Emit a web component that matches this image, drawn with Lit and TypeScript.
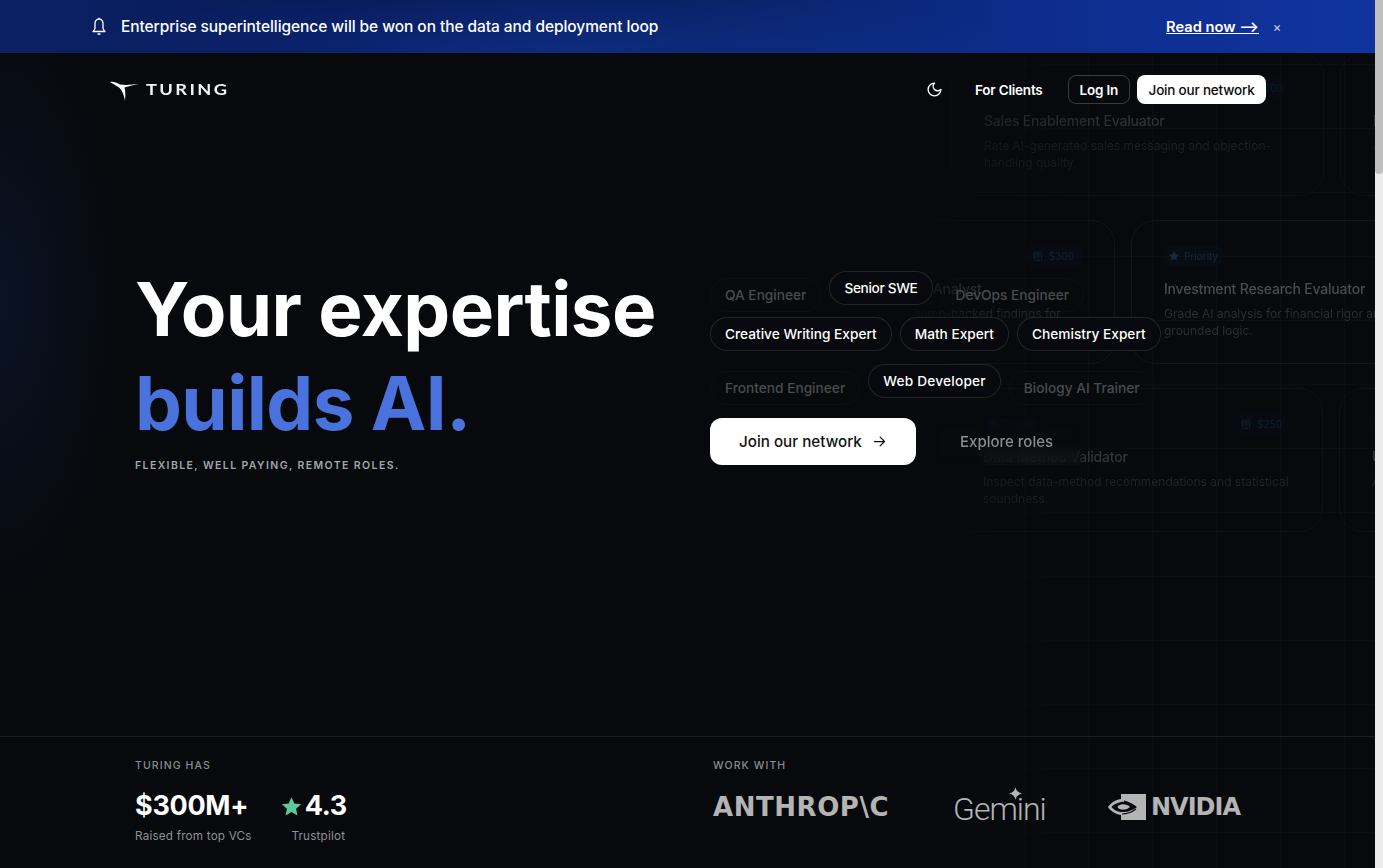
import { LitElement, html, css, svg } from "lit";
import { customElement } from "lit/decorators.js";

const gift = svg`<svg class="bi" viewBox="0 0 24 24" fill="none" stroke="currentColor" stroke-width="2"><rect x="3" y="8" width="18" height="4" rx="1"/><path d="M12 8v13M19 12v7a2 2 0 0 1-2 2H7a2 2 0 0 1-2-2v-7M7.5 8a2.5 2.5 0 0 1 0-5C11 3 12 8 12 8s1-5 4.500-5a2.500 2.500 0 0 1 0 5"/></svg>`;
const star = svg`<svg class="bi" viewBox="0 0 24 24" fill="currentColor"><path d="M12 1.500l3.200 7 7.300.8-5.400 5 1.500 7.400L12 18l-6.600 3.700 1.500-7.400-5.400-5 7.300-.8z"/></svg>`;

interface Card { title: string; desc: string; left?: string; right?: string; }
const rows: { cls: string; cards: Card[] }[] = [
  { cls: "r1", cards: [
    { title: "Sales Enablement Evaluator", desc: "Rate AI-generated sales messaging and objection-\nhandling quality.", right: "$200" },
    { title: "Insurance Claims Reviewer", desc: "Assess AI claim summaries and coverage reasoning.", left: "Priority" },
  ]},
  { cls: "r2", cards: [
    { title: "Quantitative Investment Analyst", desc: "Evaluate models and research-backed findings for\naccuracy.", right: "$300" },
    { title: "Investment Research Evaluator", desc: "Grade AI analysis for financial rigor and\ngrounded logic.", left: "Priority" },
  ]},
  { cls: "r3", cards: [
    { title: "Data Method Validator", desc: "Inspect data-method recommendations and statistical\nsoundness.", left: "Priority", right: "$250" },
    { title: "UX Copy Reviewer", desc: "Audit AI interface copy for clarity and tone.", left: "Priority" },
  ]},
];

@customElement("app-root")
export class AppRoot extends LitElement {
  static styles = css`
    :host { display: flex; width: 1383px; height: 868px; overflow: hidden; font-family: Inter, "Open Sans", sans-serif; color: #fff; background: #07090d; }
    * { box-sizing: border-box; }
    .main { position: relative; width: 1375px; height: 868px; display: flex; flex-direction: column; overflow: hidden; background: #07090d; }
    .bar { width: 8px; height: 868px; background: #ececec; }
    .thumb { width: 8px; height: 174px; background: #bfbfbf; border-radius: 0 0 4px 4px; }

    .decor { position: absolute; inset: 0; pointer-events: none; overflow: hidden; }
    .glow { position: absolute; inset: 0; background: radial-gradient(ellipse 120px 300px at 0 300px, rgba(28,66,150,.17), transparent 100%); }
    .grid { position: absolute; inset: 0;
      background-image: linear-gradient(to right, rgba(255,255,255,.02) 1px, transparent 1px), linear-gradient(to bottom, rgba(255,255,255,.02) 1px, transparent 1px);
      background-size: 64px 64px;
      -webkit-mask-image: linear-gradient(to right, transparent 800px, #000 1150px);
      mask-image: linear-gradient(to right, transparent 800px, #000 1150px); }
    .cards { position: absolute; inset: 52px 0 0 0; display: flex; flex-direction: column; gap: 24px;
      -webkit-mask-image: linear-gradient(to right, transparent 900px, rgba(0,0,0,.6) 985px, #000 1140px);
      mask-image: linear-gradient(to right, transparent 900px, rgba(0,0,0,.6) 985px, #000 1140px); }
    .row { display: flex; gap: 16px; width: 1000px; }
    .r1 { margin-left: 951px; opacity: .62; }
    .r2 { margin-left: 742px; }
    .r3 { margin-left: 950px; opacity: .72; }
    .card { flex: 0 0 373px; height: 144px; border: 1px solid rgba(255,255,255,.05); border-radius: 24px; padding: 24px 32px; display: flex; flex-direction: column; }
    .chead { display: flex; justify-content: space-between; height: 22px; margin-bottom: 12px; }
    .badge { display: flex; align-items: center; gap: 5px; height: 22px; padding: 0 8px; border-radius: 8px; background: rgba(30,80,130,.05); color: #12293f; font-size: 10px; margin-left: auto; }
    .badge.l { margin-left: 0; margin-right: auto; gap: 4px; padding: 0 4px; }
    .bi { width: 12px; height: 12px; }
    .ct { font-size: 14px; font-weight: 500; color: #4a4b50; line-height: 20px; white-space: nowrap; letter-spacing: -.2px; }
    .cd { font-size: 12px; color: #2c2d32; line-height: 17px; margin-top: 6px; white-space: pre; }

    .banner { position: relative; height: 53px; flex: none; display: flex; align-items: center; padding: 0 92px 0 92px;
      background: radial-gradient(ellipse 500px 90px at 560px 70px, rgba(20,60,170,.55), transparent), linear-gradient(90deg, #0b2164 0, #071a58 25%, #08205f 50%, #0d2c8c 75%, #10349f 100%);
      box-shadow: 0 1px 0 rgba(0,0,0,.5); }
    .bell { width: 14px; height: 20px; margin-right: 15px; flex: none; }
    .bt { font-size: 15.500px; font-weight: 500; flex: 1; white-space: nowrap; letter-spacing: -.07px; }
    .read { font-size: 14.700px; font-weight: 600; color: #fff; text-decoration: underline; margin-right: 12px; }
    .x { font-size: 13px; width: 12px; text-align: center; color: #d0d7ee; }

    nav { position: relative; height: 73px; flex: none; display: flex; align-items: center; padding: 0 109px 0 110px; }
    .logo { display: flex; align-items: center; gap: 7px; }
    .swoosh { width: 29px; height: 22px; margin-top: 3px; }
    .word { font-family: Lato, sans-serif; font-size: 14.500px; font-weight: 700; letter-spacing: 1.900px; color: #f2f2f2; transform: scaleX(1.26); transform-origin: left; }
    .links { margin-left: auto; display: flex; align-items: center; }
    .moon { width: 17px; height: 17px; margin-right: 32px; }
    .fc { font-size: 13.500px; font-weight: 600; margin-right: 25px; white-space: nowrap; letter-spacing: -.2px; }
    .btn { height: 29px; display: flex; align-items: center; padding: 0 11px; border-radius: 8px; font-size: 13.500px; font-weight: 600; white-space: nowrap; letter-spacing: -.2px; }
    .login { border: 1px solid rgba(255,255,255,.2); margin-right: 7px; }
    .njoin { background: #fff; color: #0a0a0a; font-weight: 500; padding: 0 11.500px; }

    .hero { position: relative; flex: 1; display: grid; grid-template-columns: 575px 1fr; padding: 136px 0 0 135px; }
    h1 { margin: 0; font-size: 74.500px; font-weight: 650; line-height: 94px; letter-spacing: -.6px; white-space: nowrap; }
    h1 span { display: block; }
    .blue { color: #4a72dc; }
    .sub { margin-top: 9px; font-size: 10.500px; font-weight: 600; letter-spacing: 1.400px; color: #a3a5a9; }

    .right { padding-top: 15px; }
    .chips { display: flex; flex-direction: column; gap: 4px; }
    .crow { display: flex; gap: 8px; height: 35px; align-items: center; }
    .crow + .crow + .crow { margin-top: 15px; }
    .chip { height: 34px; display: flex; align-items: center; padding: 0 14px; border-radius: 18px; border: 1px solid rgba(255,255,255,.11); background: rgba(8,10,14,.92); font-size: 13.700px; font-weight: 500; white-space: nowrap; color: #fff; }
    .chip.f { border-color: rgba(255,255,255,.025); background: transparent; color: #494b50; }
    .chip.up { transform: translateY(-7px); }
    .chip.sw { letter-spacing: -.35px; }
    .chip.wd { letter-spacing: .2px; }
    .cta { display: flex; align-items: center; margin-top: 13px; }
    .join { width: 206px; height: 47px; background: #fff; color: #111; border-radius: 12px; display: flex; align-items: center; padding-left: 29px; font-size: 15.200px; font-weight: 500; white-space: nowrap; }
    .join svg { width: 15px; height: 15px; margin-left: 10px; }
    .explore { margin-left: 14px; width: 152px; height: 47px; display: flex; align-items: center; padding-left: 30px; font-size: 15px; font-weight: 500; color: #8b8c8e; -webkit-backdrop-filter: blur(6px); backdrop-filter: blur(6px); white-space: nowrap; }

    footer { position: relative; flex: none; height: 132px; border-top: 1px solid rgba(255,255,255,.09); display: grid; grid-template-columns: 578px 1fr; padding: 23px 0 0 135px; }
    .lab { font-size: 10.500px; font-weight: 500; letter-spacing: 1.100px; color: #8b8c8f; line-height: 12px; }
    .stats { display: flex; gap: 29px; margin-top: 18px; }
    .stat { display: flex; flex-direction: column; }
    .num { display: flex; align-items: center; font-size: 27px; font-weight: 650; line-height: 32px; gap: 3px; letter-spacing: -.3px; }
    .num svg { width: 21px; height: 21px; }
    .cap { font-size: 11.700px; color: #8f9094; margin-top: 7px; line-height: 14px; letter-spacing: .2px; white-space: nowrap; }
    .tc { text-align: center; padding-left: 9px; }
    .logos { display: flex; align-items: center; height: 36px; margin-top: 17px; color: #b4b4b4; }
    .anth { font-family: "DejaVu Sans", sans-serif; font-weight: 700; font-size: 26px; letter-spacing: .55px; width: 240px; white-space: nowrap; }
    .gem { position: relative; font-family: Roboto, sans-serif; font-weight: 300; font-size: 32px; letter-spacing: -1px; width: 155px; white-space: nowrap; padding-top: 3px; }
    .spark { position: absolute; left: 56px; top: 0; width: 13px; height: 13px; }
    .nv { display: flex; align-items: center; gap: 5px; font-family: "DejaVu Sans", sans-serif; font-weight: 700; font-size: 24px; letter-spacing: -1px; white-space: nowrap; }
    .eye { width: 38px; height: 26px; }
  `;

  private card(c: Card) {
    return html`<div class="card">
      <div class="chead">
        ${c.left ? html`<div class="badge l">${star}${c.left}</div>` : ""}
        ${c.right ? html`<div class="badge">${gift}${c.right}</div>` : ""}
      </div>
      <div class="ct">${c.title}</div>
      <div class="cd">${c.desc}</div>
    </div>`;
  }

  render() {
    return html`
      <div class="main">
        <div class="decor">
          <div class="glow"></div>
          <div class="grid"></div>
          <div class="cards">
            ${rows.map((r) => html`<div class="row ${r.cls}">${r.cards.map((c) => this.card(c))}</div>`)}
          </div>
        </div>

        <div class="banner">
          <svg class="bell" viewBox="0 0 14 20" fill="none" stroke="#fff" stroke-width="1.300" stroke-linejoin="round"><path d="M7 2c-2.600 0-4 2-4 4.500v4.500c0 1.400-1 2.500-2 3.500h12c-1-1-2-2.100-2-3.500V6.500C11 4 9.600 2 7 2zM7 .8V2"/><path d="M6 17h2" stroke-linecap="round"/></svg>
          <div class="bt">Enterprise superintelligence will be won on the data and deployment loop</div>
          <a class="read">Read now ⟶</a>
          <div class="x">×</div>
        </div>

        <nav>
          <div class="logo">
            <svg class="swoosh" viewBox="0 0 29 22"><path fill="#fff" d="M0 2c4-1 7 1 10 2.500 6 .8 12 .2 19-.5-5 1-10 2-14.500 3.500C15.500 11 15.500 16 15 21 14 15 12 10 9 7.500 6 5.500 3 4 0 2z"/></svg>
            <span class="word">TURING</span>
          </div>
          <div class="links">
            <svg class="moon" viewBox="0 0 24 24" fill="none" stroke="#fff" stroke-width="2" stroke-linecap="round" stroke-linejoin="round"><path d="M12 3a6 6 0 0 0 9 9 9 9 0 1 1-9-9Z"/></svg>
            <span class="fc">For Clients</span>
            <span class="btn login">Log In</span>
            <span class="btn njoin">Join our network</span>
          </div>
        </nav>

        <section class="hero">
          <div>
            <h1><span>Your expertise</span><span class="blue">builds AI.</span></h1>
            <div class="sub">FLEXIBLE, WELL PAYING, REMOTE ROLES.</div>
          </div>
          <div class="right">
            <div class="chips">
              <div class="crow"><span class="chip f">QA Engineer</span><span class="chip up sw">Senior SWE</span><span class="chip f">DevOps Engineer</span></div>
              <div class="crow"><span class="chip">Creative Writing Expert</span><span class="chip">Math Expert</span><span class="chip">Chemistry Expert</span></div>
              <div class="crow"><span class="chip f">Frontend Engineer</span><span class="chip up wd">Web Developer</span><span class="chip f">Biology AI Trainer</span></div>
            </div>
            <div class="cta">
              <div class="join">Join our network<svg viewBox="0 0 24 24" fill="none" stroke="#111" stroke-width="2" stroke-linecap="round" stroke-linejoin="round"><path d="M4 12h16M13 5l7 7-7 7"/></svg></div>
              <div class="explore">Explore roles</div>
            </div>
          </div>
        </section>

        <footer>
          <div>
            <div class="lab">TURING HAS</div>
            <div class="stats">
              <div class="stat"><div class="num">$300M+</div><div class="cap">Raised from top VCs</div></div>
              <div class="stat"><div class="num"><svg viewBox="0 0 24 24" fill="#5cc99b"><path d="M12 1.500l3.200 7 7.800.9-5.800 5.200 1.600 7.700L12 18.400l-6.800 3.900 1.600-7.700L1 9.400l7.800-.9z"/></svg>4.3</div><div class="cap tc">Trustpilot</div></div>
            </div>
          </div>
          <div>
            <div class="lab">WORK WITH</div>
            <div class="logos">
              <div class="anth">ANTHROP\\C</div>
              <div class="gem">Gemini<svg class="spark" viewBox="0 0 12 12" fill="#b4b4b4"><path d="M6 0c.6 3.300 2.400 5.300 6 6-3.600.7-5.400 2.700-6 6-.6-3.300-2.400-5.300-6-6 3.600-.7 5.400-2.700 6-6z"/></svg></div>
              <div class="nv"><svg class="eye" viewBox="0 0 38 26"><path fill="#b4b4b4" fill-rule="evenodd" d="M13 0h25v26H13v-5C6 20 2 16 0 13 2 10 6 6 13 5zM13 8C8 9 5 11 3.500 13 5 15 8 17.500 13 18c7 .5 12-2 16-5-4-3-9-6-16-5zM13 10.500c4-.5 7 .5 9 2.500-2 2-5 3-9 2.500-2-.5-3-1.500-3.500-2.500.5-1 1.500-2 3.500-2.500z"/><path fill="none" stroke="#07090d" stroke-width="1.200" d="M16 7c4 1 8 3 11 6M14 20c5 0 10-2 14-5"/></svg>NVIDIA</div>
            </div>
          </div>
        </footer>
      </div>
      <div class="bar"><div class="thumb"></div></div>
    `;
  }
}
